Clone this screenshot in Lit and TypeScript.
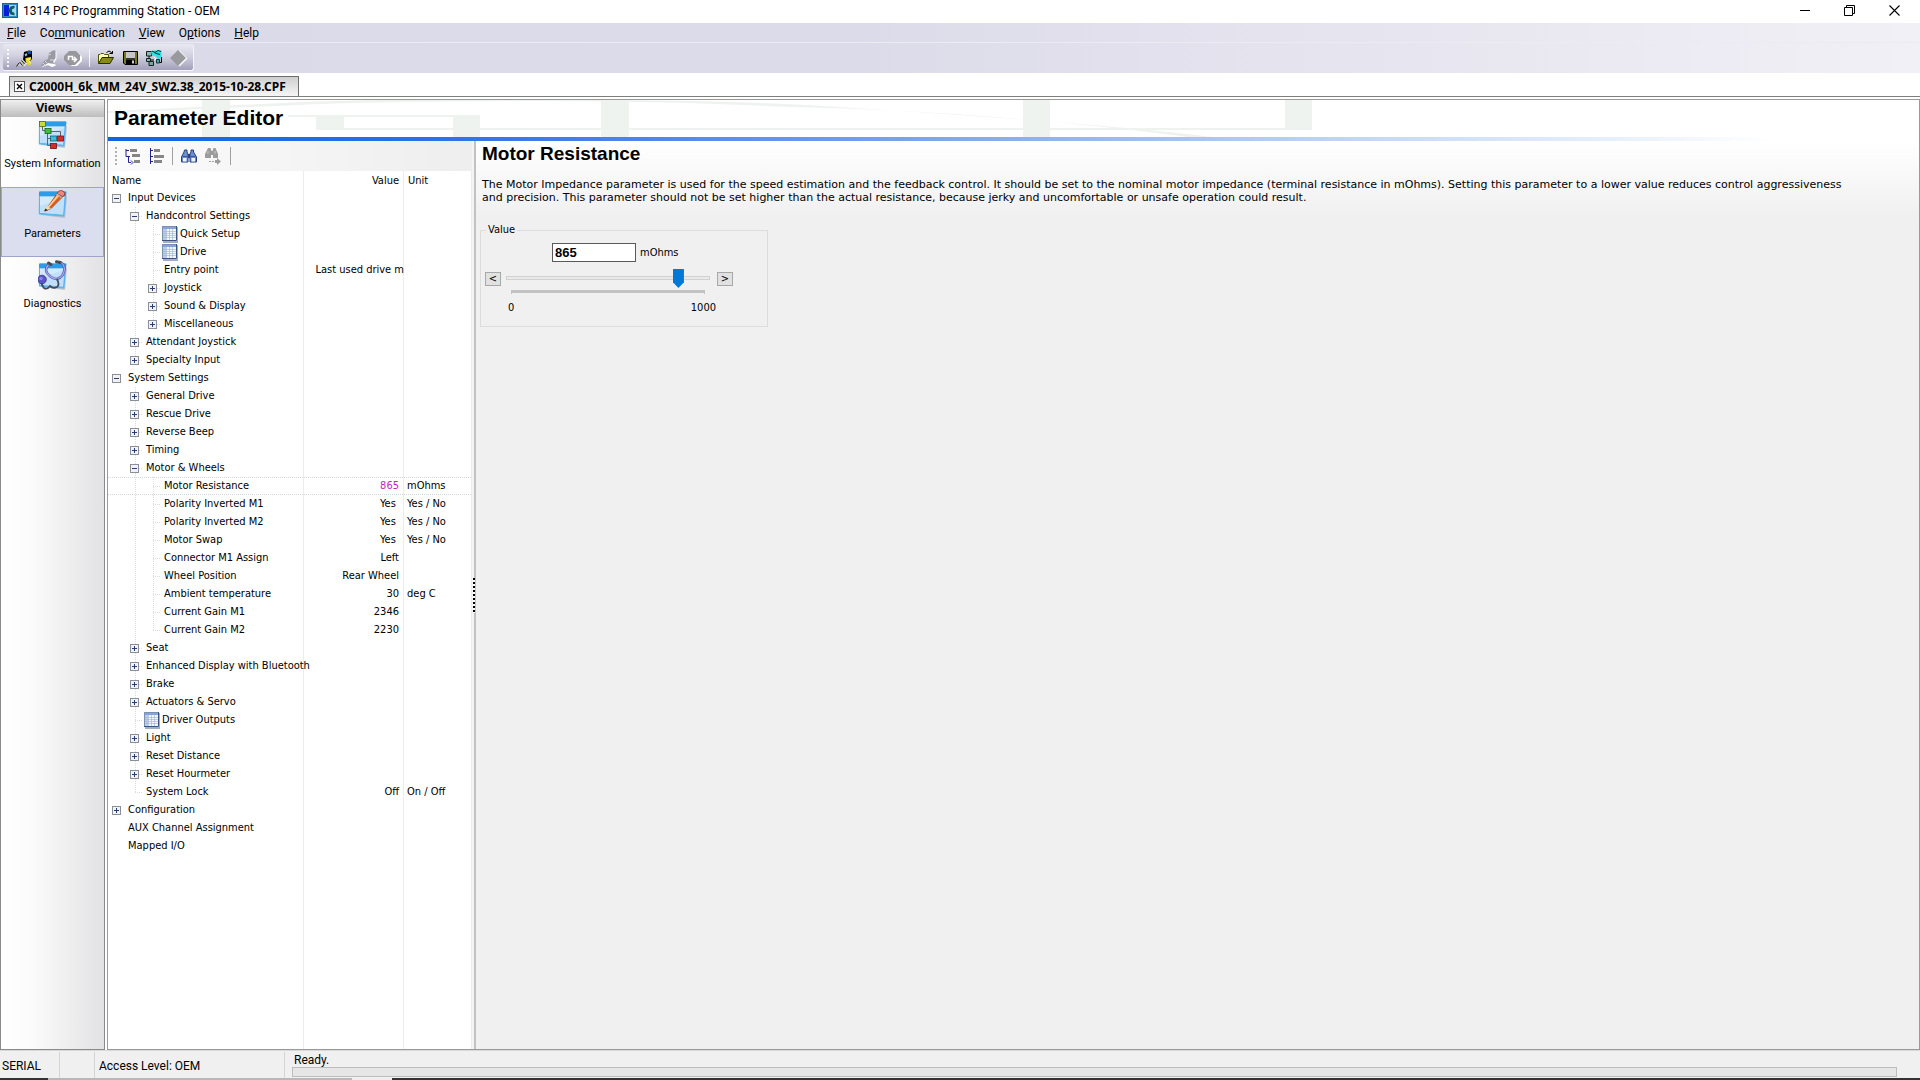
import { LitElement, html, css, svg, nothing } from "lit";
import { customElement, state } from "lit/decorators.js";

type Row = {
  name: string;
  level: number;
  open?: boolean;
  sheet?: boolean;
  last?: boolean;
  value?: string;
  unit?: string;
  selected?: boolean;
  clipped?: boolean;
};

const ROWS: Row[] = [
  { name: "Input Devices", level: 0, open: true },
  { name: "Handcontrol Settings", level: 1, open: true },
  { name: "Quick Setup", level: 2, sheet: true },
  { name: "Drive", level: 2, sheet: true },
  { name: "Entry point", level: 2, value: "Last used drive m", clipped: true },
  { name: "Joystick", level: 2, open: false },
  { name: "Sound & Display", level: 2, open: false },
  { name: "Miscellaneous", level: 2, open: false, last: true },
  { name: "Attendant Joystick", level: 1, open: false },
  { name: "Specialty Input", level: 1, open: false, last: true },
  { name: "System Settings", level: 0, open: true },
  { name: "General Drive", level: 1, open: false },
  { name: "Rescue Drive", level: 1, open: false },
  { name: "Reverse Beep", level: 1, open: false },
  { name: "Timing", level: 1, open: false },
  { name: "Motor & Wheels", level: 1, open: true },
  { name: "Motor Resistance", level: 2, value: "865", unit: "mOhms", selected: true },
  { name: "Polarity Inverted M1", level: 2, value: "Yes\u00a0", unit: "Yes / No" },
  { name: "Polarity Inverted M2", level: 2, value: "Yes\u00a0", unit: "Yes / No" },
  { name: "Motor Swap", level: 2, value: "Yes\u00a0", unit: "Yes / No" },
  { name: "Connector M1 Assign", level: 2, value: "Left" },
  { name: "Wheel Position", level: 2, value: "Rear Wheel" },
  { name: "Ambient temperature", level: 2, value: "30", unit: "deg C" },
  { name: "Current Gain M1", level: 2, value: "2346" },
  { name: "Current Gain M2", level: 2, value: "2230", last: true },
  { name: "Seat", level: 1, open: false },
  { name: "Enhanced Display with Bluetooth", level: 1, open: false },
  { name: "Brake", level: 1, open: false },
  { name: "Actuators & Servo", level: 1, open: false },
  { name: "Driver Outputs", level: 1, sheet: true },
  { name: "Light", level: 1, open: false },
  { name: "Reset Distance", level: 1, open: false },
  { name: "Reset Hourmeter", level: 1, open: false },
  { name: "System Lock", level: 1, value: "Off", unit: "On / Off", last: true },
  { name: "Configuration", level: 0, open: false },
  { name: "AUX Channel Assignment", level: 0 },
  { name: "Mapped I/O", level: 0 },
];

const icon = (w: number, h: number, body: unknown) =>
  html`<svg width=${w} height=${h} viewBox="0 0 ${w} ${h}" aria-hidden="true">${body}</svg>`;

/* Title bar */
const logo = icon(16, 16, svg`
  <rect x=".5" y=".5" width="15" height="14" fill="#2f8fc4" stroke="#1d5f9c"/>
  <rect x="2" y="2" width="5" height="11" fill="#0a1ee0"/>
  <rect x="7" y="2" width="7" height="11" fill="#a4dcee"/>
  <path d="M12.500 2.500L8.500 3.500L6 7.500L8.500 11.500L12.500 12.500V10L10 8.500V6.500L12.500 5Z" fill="#0d5f66"/>`);
const minIcon = icon(10, 11, svg`<path d="M0 5.500H10" stroke="#000"/>`);
const restoreIcon = icon(11, 11, svg`<path d="M.5 2.500H8.500V10.500H.5ZM2.500 2.500V.5H10.500V8.500H8.500" fill="none" stroke="#000"/>`);
const closeIcon = icon(11, 11, svg`<path d="M.5 .5L10.500 10.500M10.500 .5L.5 10.500" stroke="#000" stroke-width="1.100"/>`);

/* Main toolbar */
const connectIcon = icon(17, 17, svg`
  <path d="M8 2L13 0.500L16 1V9L13 12L10 12.500L7 10Z" fill="#000"/>
  <path d="M11 1H15V4H12Z" fill="#1646c8"/>
  <path d="M8.500 4.500L10.500 3L11.500 5L9.500 6.500Z" fill="#8fc7c4"/>
  <path d="M9.500 8L15 7V9.500L13 11L15.500 14L12.500 15.500L9.500 11Z" fill="#e8d820"/>
  <path d="M11 9.500L14 8.500L13 10.500L14.500 13.500" fill="none" stroke="#fff8a0"/>
  <path d="M1 16L3.500 12L7 9.500L9 12.500L6.500 15.500Z" fill="#c8c8c8"/>
  <path d="M3.500 12L6.500 15.500M5.500 10.500L8.500 14M0.500 16.500L3 13" stroke="#222"/>
  <path d="M8 16L10.500 13" stroke="#fff"/>`);
const disconnectIcon = icon(17, 17, svg`
  <path d="M9 3L13 .5H15.500V8L13 12L15 14.500L11 16L7 14L1 16L4 11L8 9Z" fill="#fff" transform="translate(1 1)"/>
  <path d="M9 3L13 .5H15.500V8L13 12L15 14L11 13.500L8 13L4.500 15.500L1 16L4 11L8 9Z" fill="#9a9aa2"/>
  <path d="M9 5L11 4M5 11L8 14M3 13L5 15M10 10H14" stroke="#dcdce4"/>`);
const refreshIcon = icon(18, 17, svg`
  <path d="M6 1H12L17 6V10L12 15H7L2 10V6Z" fill="#fff" transform="translate(1 1)"/>
  <path d="M5 1H12L16 5V10L11 15H5L0 10V6Z" fill="#98989c"/>
  <path d="M4.500 10V6.500H8.500V9.500H12.500M10 7L12.500 9.500L10 12" fill="none" stroke="#fff" stroke-width="1.500"/>`);
const openIcon = icon(18, 16, svg`
  <path d="M1.500 13V4.500H3L4 3.500H6.500L7.500 4.500H11.500V7" fill="#ffffb0" stroke="#555500"/>
  <path d="M1.500 13.500L5 7.500H16.500L13 13.500Z" fill="#8a8a18" stroke="#2a2a00"/>
  <path d="M9.500 2.500Q12 -.5 14.500 2.500L15 4M12.500 3.500H15.500V1" fill="none" stroke="#000"/>`);
const saveIcon = icon(16, 16, svg`
  <path d="M1.500 1.500H15.500V14.500H3L1.500 13Z" fill="#77771c" stroke="#000"/>
  <rect x="4" y="2" width="9" height="6" fill="#c6c6c6"/>
  <rect x="4" y="9.500" width="9" height="5" fill="#000"/>
  <rect x="10" y="10.500" width="2" height="3" fill="#d0d0d0"/>
  <path d="M4 8.500H13" stroke="#333"/>`);
const networkIcon = icon(18, 17, svg`
  <path d="M1.500 1.500H6.500V6H1.500Z" fill="#8fb8b0" stroke="#122"/>
  <path d="M6 2L9 .5H16.500V8L13 9L10 5.500L7 6Z" fill="#35dce4"/>
  <path d="M7 1L10 2.500L13 .5L16 1.500M10 3L15 4.500" fill="none" stroke="#0a2a30"/>
  <path d="M4 6V10M4 10H9M13 9V12.500H16.500V7" fill="none" stroke="#000"/>
  <path d="M1.500 8.500H5.500V11.500H1.500Z" fill="#88b0a4" stroke="#122"/>
  <path d="M4 11.500H8.500V15.500H4Z" fill="#7aa898" stroke="#122"/>
  <path d="M11.500 9.500H14.500V13H11.500Z" fill="#46a89a" stroke="#134"/>
  <path d="M9 7L11 9L9 10" fill="none" stroke="#fff"/>`);
const stopIcon = icon(18, 17, svg`
  <path d="M8 .5L16 8.500L8 16.500L0 8.500Z" fill="#fff" transform="translate(1.500 0)"/>
  <path d="M8 0L16 8L8 16L0 8Z" fill="#9a9a9e"/>`);

/* Tree toolbar */
const expandIcon = icon(16, 17, svg`
  <path d="M1 1V8.500H5M1 2.500H4M3.500 9V14.500H6M6 12.500L8 14.500L6 16.500" fill="none" stroke="#2020a0"/>
  <path d="M5 1H12V4H5ZM7 6H15V9H7ZM9 12H15V15H9Z" fill="#868686"/>`);
const collapseIcon = icon(15, 17, svg`
  <path d="M1.500 0V16M1 2.500H4M1 8.500H4M1 13.500H4" fill="none" stroke="#2020a0"/>
  <path d="M5 1H11V4H5ZM5 7H15V10H5ZM5 12H13V15H5Z" fill="#868686"/>`);
const findIcon = icon(16, 15, svg`
  <path d="M3.500 1H6V3L7 5V13H.5V8L3 3ZM10 1H12.500V3L15.500 8V13H9V5L10 3Z" fill="#6f8fd0" stroke="#2a4080"/>
  <path d="M7 5H9V9H7Z" fill="#2a4080"/>
  <path d="M2 9H5.500V12.500H2ZM10.500 9H14V12.500H10.500Z" fill="#eef3fc"/>
  <path d="M1.500 7.500H6M10 7.500H14.500" stroke="#3a56a0"/>`);
const findNextIcon = icon(17, 17, svg`
  <path d="M3 0H5.500L6.500 3H7.500L8.500 0H10.500L13 6V10H8V7H6V10H0V6Z" fill="#9c9c9c"/>
  <path d="M3 3V6M10 3V6" stroke="#c8c8c8"/>
  <path d="M4 13.500H6M7 13.500H9" stroke="#9c9c9c"/>
  <path d="M10 12H12V10L16 13.500L12 17V15H10Z" fill="#9c9c9c"/>`);
const sheetIcon = icon(16, 17, svg`
  <rect x="1" y="1" width="15" height="16" fill="#a3aebf"/>
  <rect x="0" y="0" width="15" height="15" fill="#f4f8fe"/>
  <rect x="0" y="0" width="15" height="3" fill="#86a4d8"/>
  <rect x="0" y="3" width="4" height="12" fill="#b9cbea"/>
  <path d="M1 5.500H14M1 7.500H14M1 9.500H14M1 11.500H14M4.500 3V14M7.500 3V14M10.500 3V14" stroke="#a4b8dc" stroke-width=".7"/>
  <path d="M.5 15V.5H14" fill="none" stroke="#7c90b4"/>
  <path d="M14.500 0V14.500H0" fill="none" stroke="#3b5480"/>`);

/* View icons */
const plate = svg`
  <path d="M3 4L29 6L27 28L3 25Z" fill="#8d9db0" opacity=".5"/>
  <path d="M1 2.500Q1 1.500 2 1.500L27.500 1.500Q28.500 1.500 28.300 2.500L26.500 25.500Q26.300 26.500 25.300 26.400L1.500 24.500Q.8 24.400 .8 23.500Z" fill="#5fb4ee"/>
  <path d="M1 2.500Q1 1.500 2 1.500L27.500 1.500Q28.500 1.500 28.300 2.500L28 6H1Z" fill="#2d9be6"/>
  <path d="M2 6.500H26.500L25 24.500L2 22.800Z" fill="#d4e9fb"/>
  <path d="M2 16L26 8L25 24.500L2 22.800Z" fill="#b6dafa" opacity=".7"/>`;
const systemIcon = icon(30, 30, svg`${plate}
  <path d="M4.500 5V10.500H10M9.500 12V25.500H13M10 18.500H14M12 11.500H22.500V16" fill="none" stroke="#5a6670"/>
  <rect x="1.500" y="1.500" width="6" height="5" fill="#c6dc3c" stroke="#5a6a1a" stroke-width=".8"/>
  <rect x="7" y="8.500" width="6" height="5" fill="#3fbe3a" stroke="#17601a" stroke-width=".8"/>
  <rect x="12.500" y="16" width="6" height="5" fill="#35c2dc" stroke="#14606e" stroke-width=".8"/>
  <rect x="19.500" y="16" width="6" height="5" fill="#d82c2c" stroke="#701414" stroke-width=".8"/>
  <rect x="12.500" y="23.500" width="6" height="5" fill="#d82c2c" stroke="#701414" stroke-width=".8"/>`);
const pencilIcon = icon(30, 30, svg`${plate}
  <path d="M7 21L20.500 1.500L26.500 5L13 18.500Z" fill="#f08a3c" stroke="#8a3c14" stroke-width=".8"/>
  <path d="M10 17.500L22.500 2.500" stroke="#ffd0a0" stroke-width="1.500"/>
  <path d="M12 18L24.500 4.500" stroke="#d8541c" stroke-width="1.500"/>
  <path d="M20.500 1.500Q22 -.5 25 1Q27.500 3 26.500 5L24.500 6.500L19 3.500Z" fill="#e88a80" stroke="#8a3434" stroke-width=".8"/>
  <path d="M18.500 4L23.500 7.500" stroke="#b8b8c8" stroke-width="1.500"/>
  <path d="M6.500 21L9 16L13 18.500Z" fill="#f6d8a8"/>
  <path d="M6 21.500L7.500 18.500L10 20.200Z" fill="#50200c"/>`);
const scopeIcon = icon(30, 31, svg`<g transform="translate(0 2)">${plate}</g>
  <path d="M12 3Q6 9 9 13Q14 19 19 19Q26 17 26.500 9Q26 3 21.500 2" fill="none" stroke="#555aa8" stroke-width="2.600"/>
  <path d="M12 3Q6 9 9 13Q14 19 19 19Q26 17 26.500 9Q26 3 21.500 2" fill="none" stroke="#aaa6ee" stroke-width="1.200"/>
  <path d="M19 19Q22 25 19 27Q15 29 12 26Q9 30 6 28Q4 26 3.500 23" fill="none" stroke="#444c58" stroke-width="1.800"/>
  <circle cx="4" cy="19.500" r="4.300" fill="#5a56c8" stroke="#34307c" stroke-width=".8"/>
  <circle cx="3" cy="18.500" r="1.600" fill="#8e8af0"/>
  <path d="M10.500 3L13 4.500M18.500 1.800L22 2.500" stroke="#454c58" stroke-width="3" stroke-linecap="round"/>`);

@customElement("app-root")
export class AppRoot extends LitElement {
  @state() private resistance = 865;

  static styles = css`
    :host {
      display: flex;
      flex-direction: column;
      height: 100vh;
      overflow: hidden;
      background: #fff;
      color: #000;
      font: 11px/14px "DejaVu Sans Condensed", "Noto Sans", sans-serif;
    }
    * { box-sizing: border-box; }
    svg { display: block; flex: none; }
    button {
      font: inherit;
      color: inherit;
      padding: 0;
      border: 0;
      background: none;
    }
    .titlebar, .menubar, .statusbar { font: 12px/16px Roboto, "Open Sans", sans-serif; }
    .titlebar {
      display: flex;
      align-items: center;
      height: 23px;
      padding: 0 3px 1px 2px;
      gap: 5px;
    }
    .app-title { font: inherit; margin: 0; flex: 1; }
    .window-buttons { display: flex; }
    .window-button {
      width: 45px;
      height: 22px;
      padding-bottom: 2px;
      display: grid;
      place-items: center;
    }
    .chrome { background: linear-gradient(90deg, #dbdae8 0%, #dcdbe9 45%, #f1f0f6 100%); }
    .menubar {
      display: flex;
      height: 20px;
      align-items: center;
      border-bottom: 1px solid #ebebf4;
    }
    .menu-item { padding: 0 7px; }
    .mnemonic { text-decoration: underline; }
    .toolbar-row { display: flex; height: 30px; padding: 1px 3px 2px; }
    .toolbar {
      display: flex;
      align-items: center;
      gap: 7px;
      padding: 2px 5px 0 4px;
      border-radius: 3px;
      border-right: 1px solid #f4f4fa;
      border-bottom: 1px solid #f4f4fa;
      background: linear-gradient(#e9e9f2, #d2d1e0 45%, #a19fba);
    }
    .grip {
      width: 2px;
      height: 18px;
      flex: none;
      background: repeating-linear-gradient(#f8f8fc 0 2px, transparent 2px 4px);
    }
    .grip.dark { background: repeating-linear-gradient(#b0b0b0 0 2px, transparent 2px 4px); }
    .separator { width: 1px; height: 18px; background: #f4f4fa; }
    .separator.dark { background: #a0a0a0; }
    .tabs {
      display: flex;
      align-items: flex-end;
      height: 24px;
      padding-left: 9px;
      border-bottom: 1px solid #7c7f7c;
    }
    .tab {
      display: flex;
      align-items: center;
      gap: 4px;
      height: 20px;
      padding: 0 12px 0 4px;
      border: 1px solid #6e6e6e;
      border-bottom: 0;
      background: linear-gradient(#cfcfcf, #f6f6f6);
      font: bold 12px/16px "Noto Sans", sans-serif;
    }
    .tab-close {
      width: 11px;
      height: 11px;
      border: 1px solid #555;
      background: #fff;
      display: grid;
      place-items: center;
    }
    .workspace {
      flex: 1;
      min-height: 0;
      display: flex;
      gap: 2px;
      padding-top: 2px;
    }
    .views {
      width: 105px;
      display: flex;
      flex-direction: column;
      border: 1px solid #8a8a8a;
      background: linear-gradient(90deg, #fff 0%, #fbfbfb 30%, #e2e2e4 100%);
    }
    .views-title {
      margin: 0;
      height: 17px;
      padding-left: 3px;
      text-align: center;
      font: bold 13px/16px "Liberation Sans", sans-serif;
      background: linear-gradient(#f0f0f0, #bdbdbd);
    }
    .view {
      height: 70px;
      display: flex;
      flex-direction: column;
      align-items: center;
      justify-content: space-between;
      padding: 2px 0 15px;
      border: 1px solid transparent;
      font: 11px/14px Roboto, sans-serif;
      white-space: nowrap;
    }
    .view.current { background: #dbdeee; border-color: #a0a4c8; }
    .editor {
      flex: 1;
      min-width: 0;
      display: flex;
      flex-direction: column;
      border: 1px solid #9a9a9a;
    }
    .banner { display: grid; height: 37px; overflow: hidden; }
    .banner > * { grid-area: 1 / 1; }
    .banner-title {
      margin: 0;
      padding: 0 6px;
      font: bold 21px/36px "Liberation Sans", sans-serif;
    }
    .rule {
      height: 4px;
      background: linear-gradient(90deg, #1262e2 0%, #2b72e6 18%, #4c88ea 30%, #c4d8f8 70%, #fff 92%);
    }
    .panes { flex: 1; min-height: 0; display: flex; }
    .tree-pane {
      width: 364px;
      flex: none;
      display: flex;
      flex-direction: column;
    }
    .tree-tools {
      display: flex;
      align-items: center;
      gap: 8px;
      height: 30px;
      padding-left: 7px;
      background: linear-gradient(90deg, #fbfbfb, #eee);
    }
    .tree-body {
      flex: 1;
      background:
        linear-gradient(#ececec, #ececec) 195px 0 / 1px 100% no-repeat,
        linear-gradient(#ececec, #ececec) 295px 0 / 1px 100% no-repeat,
        linear-gradient(#ececec, #ececec) 363px 0 / 1px 100% no-repeat,
        #fff;
    }
    .tree { width: 100%; border-collapse: collapse; table-layout: fixed; }
    .col-name { width: 196px; }
    .col-value { width: 100px; }
    .tree th, .tree td {
      padding: 0 0 0 4px;
      font-weight: normal;
      text-align: left;
      white-space: nowrap;
    }
    .tree th { height: 18px; line-height: 16px; vertical-align: bottom; }
    .tree td { height: 18px; }
    .tree th.value, .tree td.value { text-align: right; padding: 0 5px 0 4px; }
    .tree td.value.clipped { padding-right: 0; }
    .tree td.unit { padding-left: 3px; }
    .selected {
      background:
        repeating-linear-gradient(90deg, #d0d8dc 0 1px, transparent 1px 2px) 0 0 / 100% 1px no-repeat,
        repeating-linear-gradient(90deg, #d0d8dc 0 1px, transparent 1px 2px) 0 100% / 100% 1px no-repeat;
    }
    .selected .value { color: #c31fc3; }
    .node { display: flex; align-items: center; height: 18px; }
    .guide, .slot { flex: none; height: 18px; width: 18px; }
    .slot { width: 16px; display: flex; align-items: center; }
    .slot.narrow { width: 14px; }
    .line {
      background:
        repeating-linear-gradient(#dcdcdc 0 1px, transparent 1px 2px) 5px 0 / 1px 100% no-repeat;
    }
    .branch {
      background:
        repeating-linear-gradient(#dcdcdc 0 1px, transparent 1px 2px) 5px 0 / 1px 100% no-repeat,
        repeating-linear-gradient(90deg, #dcdcdc 0 1px, transparent 1px 2px) 5px 9px / 8px 1px no-repeat;
    }
    .branch.end {
      background:
        repeating-linear-gradient(#dcdcdc 0 1px, transparent 1px 2px) 5px 0 / 1px 9px no-repeat,
        repeating-linear-gradient(90deg, #dcdcdc 0 1px, transparent 1px 2px) 5px 9px / 8px 1px no-repeat;
    }
    .sheet { margin-right: 2px; }
    .splitter {
      width: 4px;
      flex: none;
      display: flex;
      align-items: center;
      background: linear-gradient(90deg, #f4f4f4 0 2px, #c2c2c2 2px 4px);
    }
    .splitter-grip {
      width: 2px;
      height: 35px;
      margin: 0 0 0 1px;
      background: repeating-linear-gradient(#000 0 2px, #fff 2px 4px);
    }
    .detail {
      flex: 1;
      min-width: 0;
      padding: 0 4px;
      background: linear-gradient(#fff 0, #f0f0f0 76px);
    }
    .detail-title {
      margin: 0 2px;
      font: bold 19px/26px "Liberation Sans", sans-serif;
    }
    .description {
      margin: 11px 60px 0 2px;
      font: 11px/13px "DejaVu Sans", sans-serif;
    }
    .editor-box {
      width: 288px;
      height: 104px;
      margin: 19px 0 0;
      padding: 0 4px;
      border: 1px solid #dcdcdc;
      min-width: 0;
    }
    .editor-box legend { padding: 0 2px; margin-left: 1px; }
    .entry {
      display: flex;
      align-items: center;
      gap: 4px;
      margin: 6px 0 0 67px;
    }
    .entry input {
      width: 84px;
      height: 19px;
      padding: 0 2px;
      border: 1px solid #5a5a5a;
      background: #fff;
      font: bold 13px/15px "Liberation Sans", sans-serif;
    }
    .slide-row { display: flex; align-items: center; gap: 5px; height: 19px; margin-top: 7px; }
    .step {
      width: 16px;
      height: 14px;
      border: 1px solid #a8a8a8;
      background: #e1e1e1;
      line-height: 12px;
    }
    .range {
      appearance: none;
      width: 204px;
      height: 19px;
      margin: 0;
      margin-right: 2px;
      background: linear-gradient(#d2d2d2, #d2d2d2) 0 7px / 100% 4px no-repeat;
    }
    .range::-webkit-slider-thumb {
      appearance: none;
      width: 11px;
      height: 19px;
      background: #0078d7;
      clip-path: polygon(0 0, 100% 0, 100% 70%, 50% 100%, 0 70%);
    }
    .range::-webkit-slider-runnable-track {
      height: 19px;
      background: linear-gradient(#e9e9e9, #e9e9e9) 1px 8px / 202px 2px no-repeat;
    }
    .scale {
      width: 194px;
      height: 4px;
      margin: 2px 0 0 26px;
      border: 1px solid #c2c2c2;
      border-width: 3px 1px 0;
    }
    .scale-labels {
      display: flex;
      justify-content: space-between;
      width: 208px;
      margin: 7px 0 0 23px;
    }
    .statusbar {
      display: flex;
      height: 28px;
      background: #f0f0f0;
      border-top: 1px solid #d8d8d8;
    }
    .cell {
      display: flex;
      align-items: center;
      margin: 1px 0 0;
      padding: 2px 4px 0;
      border-right: 1px solid #d4d4d4;
    }
    .cell.port { width: 60px; padding: 2px 2px 0; }
    .cell.spare { width: 35px; }
    .cell.access { width: 190px; }
    .ready {
      flex: 1;
      display: flex;
      flex-direction: column;
      justify-content: space-between;
      padding: 3px 23px 1px 7px;
    }
    .progress-text { line-height: 13px; padding-left: 2px; }
    .progress { height: 10px; border: 1px solid #bcbcbc; background: #e6e6e6; }
    .desktop-edge {
      height: 2px;
      background: linear-gradient(90deg, #333 0 48px, #b8b8b8 48px 352px, #eee 352px 392px, #333 392px);
    }
  `;

  private menu(before: string, key: string, after: string) {
    return html`<button class="menu-item">${before}<span class="mnemonic">${key}</span>${after}</button>`;
  }

  private tool(label: string, glyph: unknown) {
    return html`<button aria-label=${label} title=${label}>${glyph}</button>`;
  }

  private row(r: Row) {
    const guides = [];
    for (let i = 0; i < r.level; i++) {
      guides.push(html`<span class="guide ${i > 0 ? "line" : ""}"></span>`);
    }
    const slot = `slot ${r.level > 0 ? "branch" : ""} ${r.last ? "end" : ""} ${r.sheet ? "narrow" : ""}`;
    return html`
      <tr class=${r.selected ? "selected" : ""}>
        <td>
          <div class="node">
            ${guides}
            <span class=${slot}>
              ${r.open === undefined ? nothing : html`
                <button aria-label="${r.open ? "Collapse" : "Expand"} ${r.name}" aria-expanded=${r.open}>
                  ${icon(9, 9, svg`
                    <rect x=".5" y=".5" width="8" height="8" fill="#f2f2f4" stroke="#8a8f98"/>
                    <path d=${r.open ? "M2 4.500H7" : "M2 4.500H7M4.500 2V7"} stroke="#283c78"/>`)}
                </button>`}
            </span>
            ${r.sheet ? html`<span class="sheet">${sheetIcon}</span>` : nothing}
            <span>${r.name}</span>
          </div>
        </td>
        <td class="value ${r.clipped ? "clipped" : ""}">${r.value ?? ""}</td>
        <td class="unit">${r.unit ?? ""}</td>
      </tr>`;
  }

  private setValue(e: Event) {
    this.resistance = Number((e.target as HTMLInputElement).value);
  }

  render() {
    return html`
      <header class="titlebar">
        ${logo}
        <h1 class="app-title">1314 PC Programming Station - OEM</h1>
        <div class="window-buttons">
          <button class="window-button" aria-label="Minimize">${minIcon}</button>
          <button class="window-button" aria-label="Restore">${restoreIcon}</button>
          <button class="window-button" aria-label="Close">${closeIcon}</button>
        </div>
      </header>

      <div class="chrome">
        <nav class="menubar" aria-label="Menu">
          ${this.menu("", "F", "ile")}
          ${this.menu("Co", "m", "munication")}
          ${this.menu("", "V", "iew")}
          ${this.menu("O", "p", "tions")}
          ${this.menu("", "H", "elp")}
        </nav>
        <div class="toolbar-row">
          <div class="toolbar" role="toolbar" aria-label="Main">
            <span class="grip"></span>
            ${this.tool("Connect", connectIcon)}
            ${this.tool("Disconnect", disconnectIcon)}
            ${this.tool("Refresh", refreshIcon)}
            <span class="separator"></span>
            ${this.tool("Open", openIcon)}
            ${this.tool("Save", saveIcon)}
            ${this.tool("Transfer", networkIcon)}
            ${this.tool("Stop", stopIcon)}
          </div>
        </div>
      </div>

      <div class="tabs">
        <div class="tab">
          <button class="tab-close" aria-label="Close file">
            ${icon(7, 7, svg`<path d="M1 1L6 6M6 1L1 6" stroke="#000" stroke-width="1.400"/>`)}
          </button>
          <span>C2000H_6k_MM_24V_SW2.38_2015-10-28.CPF</span>
        </div>
      </div>

      <main class="workspace">
        <nav class="views" aria-label="Views">
          <h2 class="views-title">Views</h2>
          <button class="view">${systemIcon}<span>System Information</span></button>
          <button class="view current">${pencilIcon}<span>Parameters</span></button>
          <button class="view">${scopeIcon}<span>Diagnostics</span></button>
        </nav>

        <section class="editor">
          <div class="banner">
            <svg width="1220" height="37" viewBox="0 0 1220 37" aria-hidden="true">
              <g fill="#eff3f0">
                <rect x="94" y="0" width="28" height="37"/>
                <rect x="208" y="17" width="28" height="13"/>
                <rect x="345" y="15" width="27" height="22"/>
                <rect x="493" y="0" width="28" height="37"/>
                <rect x="915" y="0" width="27" height="37"/>
                <rect x="1177" y="0" width="27" height="30"/>
                <rect x="180" y="15" width="192" height="2"/>
                <rect x="208" y="28" width="996" height="2"/>
                <path d="M0 11Q90 7 192 2Q330 -3 500 0Q600 0 700 5Q830 13 960 23Q1060 31 1104 37H1080Q1000 26 900 18Q790 9 683 7Q560 1 420 1Q250 2 192 5Q90 9 0 13Z"/>
              </g>
            </svg>
            <h2 class="banner-title">Parameter Editor</h2>
          </div>
          <div class="rule"></div>
          <div class="panes">
            <div class="tree-pane">
              <div class="tree-tools" role="toolbar" aria-label="Tree">
                <span class="grip dark"></span>
                ${this.tool("Expand all", expandIcon)}
                ${this.tool("Collapse all", collapseIcon)}
                <span class="separator dark"></span>
                ${this.tool("Find", findIcon)}
                ${this.tool("Find next", findNextIcon)}
                <span class="separator dark"></span>
              </div>
              <div class="tree-body">
                <table class="tree">
                  <colgroup><col class="col-name" /><col class="col-value" /><col /></colgroup>
                  <thead>
                    <tr><th>Name</th><th class="value">Value</th><th>Unit</th></tr>
                  </thead>
                  <tbody>${ROWS.map((r) => this.row(r))}</tbody>
                </table>
              </div>
            </div>
            <div class="splitter"><span class="splitter-grip"></span></div>
            <div class="detail">
              <h3 class="detail-title">Motor Resistance</h3>
              <p class="description">The Motor Impedance parameter is used for the speed estimation and the feedback control. It should be set to the nominal motor impedance (terminal resistance in mOhms). Setting this parameter to a lower value reduces control aggressiveness and precision. This parameter should not be set higher than the actual resistance, because jerky and uncomfortable or unsafe operation could result.</p>
              <fieldset class="editor-box">
                <legend>Value</legend>
                <div class="entry">
                  <input id="amount" type="text" aria-label="Value" .value=${String(this.resistance)} @change=${this.setValue} />
                  <label for="amount">mOhms</label>
                </div>
                <div class="slide-row">
                  <button class="step" aria-label="Decrease" @click=${() => (this.resistance -= 1)}>&lt;</button>
                  <input class="range" type="range" min="0" max="1000" aria-label="Motor resistance" .value=${String(this.resistance)} @input=${this.setValue} />
                  <button class="step" aria-label="Increase" @click=${() => (this.resistance += 1)}>&gt;</button>
                </div>
                <div class="scale"></div>
                <div class="scale-labels"><span>0</span><span>1000</span></div>
              </fieldset>
            </div>
          </div>
        </section>
      </main>

      <footer class="statusbar">
        <div class="cell port">SERIAL</div>
        <div class="cell spare"></div>
        <div class="cell access">Access Level: OEM</div>
        <div class="ready">
          <span class="progress-text">Ready.</span>
          <div class="progress"></div>
        </div>
      </footer>
      <div class="desktop-edge"></div>
    `;
  }
}
